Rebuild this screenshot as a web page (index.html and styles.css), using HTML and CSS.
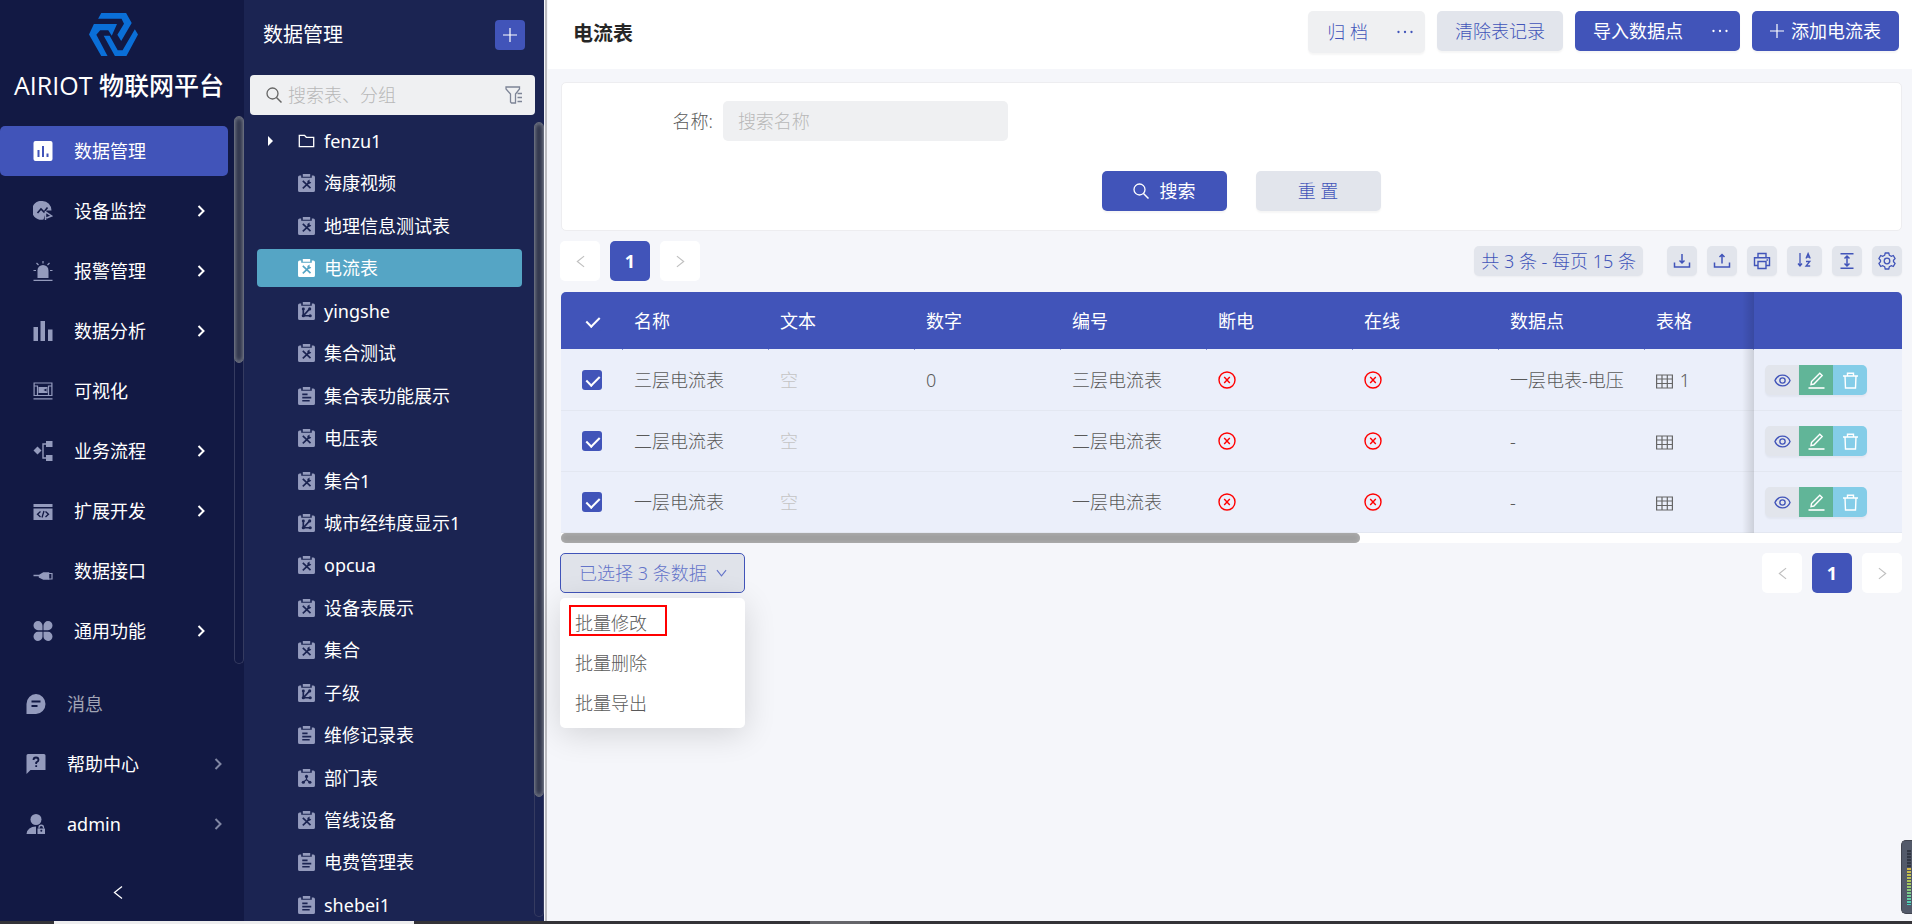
FILE: index.html
```html
<!DOCTYPE html>
<html lang="zh-CN">
<head>
<meta charset="utf-8">
<title>AIRIOT 物联网平台 - 电流表</title>
<link rel="stylesheet" href="styles.css">
</head>
<body>
<svg class="sprite" aria-hidden="true">
  <symbol id="clip" viewBox="0 0 16 17"><path d="M1.500 1.500H3V3.500H13V1.500H14.500A1.500 1.500 0 0 1 16 3V15.500A1.500 1.500 0 0 1 14.500 17H1.500A1.500 1.500 0 0 1 0 15.500V3A1.500 1.500 0 0 1 1.500 1.500ZM4.500 0H11.500V2.500H4.500Z" fill="currentColor"/></symbol>
  <symbol id="t-dev" viewBox="0 0 16 17"><use href="#clip"/><path d="M4.500 6.500L11.800 13.300M10.500 8L4.500 13.500" class="mark"/><path d="M12.500 8A2.200 2.200 0 0 1 9 8.500L8.800 6.500L11 5.200L10.800 7Z" class="markfill"/></symbol>
  <symbol id="t-map" viewBox="0 0 16 17"><use href="#clip"/><path d="M5 6.500V13H11.500M5.500 12.500L10.500 7" class="mark"/><circle cx="5" cy="6.500" r="1.400" class="markfill"/><circle cx="11" cy="6.500" r="1.500" class="markfill"/><circle cx="11.500" cy="13" r="1.500" class="markfill"/><circle cx="5" cy="13" r="1.500" class="markfill"/></symbol>
  <symbol id="t-list" viewBox="0 0 16 17"><use href="#clip"/><path d="M4 7H9M4 10H12.500M4 13H11" class="mark"/></symbol>
  <symbol id="t-org" viewBox="0 0 16 17"><use href="#clip"/><path d="M8 7.500V10M5 12.500L8 10L11 12.500" class="mark thin"/><circle cx="8" cy="7" r="1.500" class="markfill"/><circle cx="5" cy="12.500" r="1.500" class="markfill"/><circle cx="11.200" cy="12.500" r="1.500" class="markfill"/></symbol>
  <symbol id="folder" viewBox="0 0 16 14"><path d="M.8 1.300H6L7.800 3.300H15.200V12.700H.8Z" fill="none" stroke="currentColor" stroke-width="1.300"/></symbol>
  <symbol id="chev" viewBox="0 0 8 12"><path d="M1.500 1L6.500 6L1.500 11" fill="none" stroke="currentColor" stroke-width="2"/></symbol>
  <symbol id="left" viewBox="0 0 10 14"><path d="M9 1L1.500 7L9 13" fill="none" stroke="currentColor" stroke-width="1.300"/></symbol>
  <symbol id="right" viewBox="0 0 10 14"><path d="M1 1L8.500 7L1 13" fill="none" stroke="currentColor" stroke-width="1.300"/></symbol>
  <symbol id="down" viewBox="0 0 12 8"><path d="M1 .8L6 7L11 .8" fill="none" stroke="currentColor" stroke-width="1.200"/></symbol>
  <symbol id="search" viewBox="0 0 16 16"><circle cx="6.500" cy="6.500" r="5.500" fill="none" stroke="currentColor" stroke-width="1.300"/><path d="M10.500 10.500L15.500 15.500" stroke="currentColor" stroke-width="1.500"/></symbol>
  <symbol id="plus" viewBox="0 0 14 14"><path d="M7 0V14M0 7H14" stroke="currentColor" stroke-width="1.200"/></symbol>
  <symbol id="dots" viewBox="0 0 16 4"><circle cx="1.500" cy="2" r="1.150" fill="currentColor"/><circle cx="8" cy="2" r="1.150" fill="currentColor"/><circle cx="14.500" cy="2" r="1.150" fill="currentColor"/></symbol>
  <symbol id="cross" viewBox="0 0 18 18"><circle cx="9" cy="9" r="8" fill="none" stroke="currentColor" stroke-width="1.400"/><path d="M6.200 6L11.800 12M11.800 6L6.200 12" stroke="currentColor" stroke-width="1.400"/></symbol>
  <symbol id="grid" viewBox="0 0 17 15"><path d="M.6 1H16.400V14H.6ZM.6 5H16.400M.6 9.500H16.400M6 1V14M11.300 1V14" fill="none" stroke="currentColor" stroke-width="1.200"/></symbol>
  <symbol id="eye" viewBox="0 0 18 14"><path d="M1 7C4 -.6 14 -.6 17 7C14 14.600 4 14.600 1 7Z" fill="none" stroke="currentColor" stroke-width="1.400"/><circle cx="9" cy="7" r="2.800" fill="none" stroke="currentColor" stroke-width="1.400"/></symbol>
  <symbol id="edit" viewBox="0 0 16 17"><path d="M0 16H16" stroke="currentColor" stroke-width="1.600"/><path d="M3 9.500L11.300 1.200L13.700 3.600L5.400 12L2.500 12.600Z" fill="none" stroke="currentColor" stroke-width="1.400"/></symbol>
  <symbol id="trash" viewBox="0 0 16 17"><path d="M.5 4H15.500M5 4V1.200H11V4M2.500 4L3 16H13L13.500 4" fill="none" stroke="currentColor" stroke-width="1.400"/></symbol>
</svg>

<div class="app">
  <aside class="side">
    <div class="brand">
      <svg class="logo" viewBox="0 0 140 128" preserveAspectRatio="none" aria-hidden="true"><path d="M35 0H106L122 30L92 83L81 65L100 32L93 17H26ZM14 33H80L65 68L55 51H32L21 65L53 128H35L0 64ZM42 68H59L82 111H96L131 48L140 64L107 128H74Z" fill="#0a6fd8"/></svg>
      <div class="brand-name">AIRIOT 物联网平台</div>
    </div>
    <div class="nav-wrap">
      <nav class="nav">
        <a class="nav-item on" href="#"><svg viewBox="0 0 19 20"><rect width="19" height="20" rx="2" fill="currentColor"/><path d="M5 9V16M9.500 5V16M14 12.500V16" stroke="#4154b9" stroke-width="2"/></svg><span>数据管理</span></a>
        <a class="nav-item" href="#"><svg viewBox="0 0 19 20"><path d="M9 0A9 9.500 0 0 1 18 9.500H13L10 18.500A9 9.500 0 1 1 9 0Z" fill="currentColor"/><path d="M4 12L7.500 8L10.500 11L14 6.500" fill="none" stroke="#121944" stroke-width="1.600"/><path d="M12 19V11L18 15L13 17" fill="none" stroke="currentColor" stroke-width="1.500"/></svg><span>设备监控</span><svg class="arr"><use href="#chev"/></svg></a>
        <a class="nav-item" href="#"><svg viewBox="0 0 19 20"><path d="M4 17V9.500A5.500 5.500 0 0 1 15 9.500V17Z" fill="currentColor"/><path d="M0 19.300H19M9.500 0V2.500M3 2L5 4M16 2L14 4M0 9.500H2.500M16.500 9.500H19" stroke="currentColor" stroke-width="1.200"/></svg><span>报警管理</span><svg class="arr"><use href="#chev"/></svg></a>
        <a class="nav-item" href="#"><svg viewBox="0 0 19 20"><path d="M0 6H4.500V20H0ZM7 0H11.500V20H7ZM14.500 8.500H19V20H14.500Z" fill="currentColor"/></svg><span>数据分析</span><svg class="arr"><use href="#chev"/></svg></a>
        <a class="nav-item" href="#"><svg viewBox="0 0 19 20"><path d="M.6 2H18.400V14.500H.6ZM.6 5H4V14M18 5H15V14M0 17.800H19" fill="none" stroke="currentColor" stroke-width="1.200"/><path d="M5 6H14V12H5Z" fill="currentColor"/><path d="M10 9L13 7.500V10.500Z" fill="#121944"/></svg><span>可视化</span></a>
        <a class="nav-item" href="#"><svg viewBox="0 0 19 20"><path d="M4 5.500L8 9.500L4 13.500L0 9.500ZM12.500 0H19V6H12.500ZM12.500 14H19V20H12.500Z" fill="currentColor"/><path d="M13 3H9.500V17H13" fill="none" stroke="currentColor" stroke-width="1.400"/></svg><span>业务流程</span><svg class="arr"><use href="#chev"/></svg></a>
        <a class="nav-item" href="#"><svg viewBox="0 0 19 20"><path d="M0 3H19V6H0ZM0 7.500H19V19H0Z" fill="currentColor"/><path d="M7 10.500L4 13.200L7 16M12 10.500L15 13.200L12 16M10.500 10L8.500 16.500" fill="none" stroke="#121944" stroke-width="1.300"/></svg><span>扩展开发</span><svg class="arr"><use href="#chev"/></svg></a>
        <a class="nav-item" href="#"><svg viewBox="0 0 19 20"><path d="M0 14.500H6M6 14.500L10 12H15V18H10L6 16Z" fill="currentColor" stroke="currentColor" stroke-width="1.500"/><path d="M15 12.500H18.500V18H15" fill="none" stroke="currentColor" stroke-width="1.200"/></svg><span>数据接口</span></a>
        <a class="nav-item" href="#"><svg viewBox="0 0 19 20"><path d="M4.500 0A4.500 4.700 0 0 1 9 4.700V9.200H4.500A4.500 4.600 0 0 1 4.500 0ZM14.500 0A4.500 4.600 0 0 1 14.500 9.200H10V4.700A4.500 4.700 0 0 1 14.500 0ZM4.500 10.800H9V15.300A4.500 4.600 0 1 1 4.500 10.800ZM10 10.800H14.500A4.500 4.600 0 1 1 10 15.300Z" fill="currentColor"/></svg><span>通用功能</span><svg class="arr"><use href="#chev"/></svg></a>
      </nav>
      <div class="bar"><div class="thumb side-thumb"></div></div>
    </div>
    <nav class="foot">
      <a class="foot-item dim" href="#"><svg viewBox="0 0 19 20"><path d="M9.500 0A9.500 10 0 0 1 9.500 20H0V10A9.500 10 0 0 1 9.500 0Z" fill="currentColor"/><path d="M5 7.500H14M5 12H11" stroke="#121944" stroke-width="1.800"/></svg><span>消息</span></a>
      <a class="foot-item" href="#"><svg viewBox="0 0 19 20"><path d="M1.500 0H17.500A1.500 1.500 0 0 1 19 1.500V16H4L0 20V1.500A1.500 1.500 0 0 1 1.500 0Z" fill="currentColor"/><path d="M7 6Q7 3.500 9.500 3.500T12 6Q12 7.200 9.700 8.600V10M9.700 11.300V13" fill="none" stroke="#121944" stroke-width="1.800"/></svg><span>帮助中心</span><svg class="arr"><use href="#chev"/></svg></a>
      <a class="foot-item" href="#"><svg viewBox="0 0 19 20"><ellipse cx="9.500" cy="5.500" rx="5.500" ry="5.500" fill="currentColor"/><path d="M0 20Q1 12.500 9.500 12.500V20ZM11 14.500H18.500V20H11Z" fill="currentColor"/><path d="M12.500 14.500V13.500A2.200 2.200 0 0 1 17 13.500V14.500" fill="none" stroke="currentColor" stroke-width="1.300"/><circle cx="14.800" cy="16.800" r="1" fill="#121944"/></svg><span>admin</span><svg class="arr"><use href="#chev"/></svg></a>
    </nav>
    <button class="collapse" aria-label="收起"><svg><use href="#left"/></svg></button>
  </aside>

  <section class="panel">
    <header class="panel-head"><h2>数据管理</h2><button class="add" aria-label="新增"><svg class="i14"><use href="#plus"/></svg></button></header>
    <div class="find">
      <svg class="i16"><use href="#search"/></svg>
      <input type="text" placeholder="搜索表、分组" aria-label="搜索表、分组">
      <svg class="i17" viewBox="0 0 17 18"><path d="M1 1H14.500V3L10.500 8V17H6.500L5.500 16V8L1 3ZM12.500 7.500H17M12.500 11.500H17M12.500 15.500H17" fill="none" stroke="#7d8496" stroke-width="1.300"/></svg>
    </div>
    <div class="tree-wrap">
      <ul class="tree">
        <li><a href="#"><i class="caret"></i><svg class="fold"><use href="#folder"/></svg>fenzu1</a></li>
        <li><a href="#"><svg><use href="#t-dev"/></svg>海康视频</a></li>
        <li><a href="#"><svg><use href="#t-dev"/></svg>地理信息测试表</a></li>
        <li><a href="#" class="sel"><svg><use href="#t-dev"/></svg>电流表</a></li>
        <li><a href="#"><svg><use href="#t-map"/></svg>yingshe</a></li>
        <li><a href="#"><svg><use href="#t-dev"/></svg>集合测试</a></li>
        <li><a href="#"><svg><use href="#t-list"/></svg>集合表功能展示</a></li>
        <li><a href="#"><svg><use href="#t-dev"/></svg>电压表</a></li>
        <li><a href="#"><svg><use href="#t-dev"/></svg>集合1</a></li>
        <li><a href="#"><svg><use href="#t-map"/></svg>城市经纬度显示1</a></li>
        <li><a href="#"><svg><use href="#t-dev"/></svg>opcua</a></li>
        <li><a href="#"><svg><use href="#t-dev"/></svg>设备表展示</a></li>
        <li><a href="#"><svg><use href="#t-dev"/></svg>集合</a></li>
        <li><a href="#"><svg><use href="#t-map"/></svg>子级</a></li>
        <li><a href="#"><svg><use href="#t-list"/></svg>维修记录表</a></li>
        <li><a href="#"><svg><use href="#t-org"/></svg>部门表</a></li>
        <li><a href="#"><svg><use href="#t-dev"/></svg>管线设备</a></li>
        <li><a href="#"><svg><use href="#t-list"/></svg>电费管理表</a></li>
        <li><a href="#"><svg><use href="#t-list"/></svg>shebei1</a></li>
      </ul>
      <div class="bar"><div class="thumb tree-thumb"></div></div>
    </div>
  </section>
  <div class="split"></div>

  <main class="main">
    <header class="top">
      <h1>电流表</h1>
      <div class="top-actions">
        <div class="group pale"><button class="wide">归 档</button><button class="more" aria-label="更多"><svg><use href="#dots"/></svg></button></div>
        <button class="btn grey">清除表记录</button>
        <div class="group blue"><button>导入数据点</button><button class="more" aria-label="更多"><svg><use href="#dots"/></svg></button></div>
        <button class="btn blue"><svg class="i14"><use href="#plus"/></svg>添加电流表</button>
      </div>
    </header>
    <div class="content">
      <form class="card">
        <div class="field"><label for="name">名称:</label><input id="name" type="text" placeholder="搜索名称"></div>
        <div class="submit"><button type="button" class="btn blue big"><svg class="i16"><use href="#search"/></svg>搜索</button><button type="button" class="btn grey big">重 置</button></div>
      </form>

      <div class="tools">
        <div class="pager"><button disabled aria-label="上一页"><svg><use href="#left"/></svg></button><button class="cur">1</button><button disabled aria-label="下一页"><svg><use href="#right"/></svg></button></div>
        <div class="tool-right">
          <button class="count">共 3 条 - 每页 15 条</button>
          <button class="tool" aria-label="下载"><svg viewBox="0 0 18 18"><path d="M1.500 10.500V15H16.500V10.500M9 2V11M6.500 8.500L9 11L11.500 8.500" fill="none" stroke="currentColor" stroke-width="1.500"/></svg></button>
          <button class="tool" aria-label="上传"><svg viewBox="0 0 18 18"><path d="M1.500 10.500V15H16.500V10.500M9 11.500V2.500M6.500 5L9 2.500L11.500 5" fill="none" stroke="currentColor" stroke-width="1.500"/></svg></button>
          <button class="tool" aria-label="打印"><svg viewBox="0 0 18 18"><path d="M5 5.500V1.500H13V5.500M4.500 13.500H1.500V5.700H16.500V13.500H13.500M5 9.500H13V16.500H5ZM13.500 8H15" fill="none" stroke="currentColor" stroke-width="1.400"/></svg></button>
          <button class="tool sort" aria-label="排序"><svg viewBox="0 0 18 18"><path d="M4 1V14M2 11.500L4 14L6 11.500M10 6.500L12.100 1.500L14.200 6.500M10.800 5H13.400M10 9.500H13.800L10 14H14.200" fill="none" stroke="currentColor" stroke-width="1.300"/></svg></button>
          <button class="tool" aria-label="行高"><svg viewBox="0 0 18 18"><path d="M2.500 1.800H15.500M2.500 16.200H15.500M9 4.500V13.500M6.500 6.500L9 4L11.500 6.500M6.500 11.500L9 14L11.500 11.500" fill="none" stroke="currentColor" stroke-width="1.500"/></svg></button>
          <button class="tool" aria-label="设置"><svg viewBox="0 0 18 18"><path d="M7.200 1H10.800L11.300 3.200L13.200 4.300L15.300 3.500L17.100 6.600L15.500 8.200V9.800L17.100 11.400L15.300 14.500L13.200 13.700L11.300 14.800L10.800 17H7.200L6.700 14.800L4.800 13.700L2.700 14.500L.9 11.400L2.500 9.800V8.200L.9 6.600L2.700 3.500L4.800 4.300L6.700 3.200Z" fill="none" stroke="currentColor" stroke-width="1.300" stroke-linejoin="round"/><circle cx="9" cy="9" r="2.800" fill="none" stroke="currentColor" stroke-width="1.300"/></svg></button>
        </div>
      </div>

      <div class="table-box">
        <table>
          <colgroup><col class="c-check"><col class="c"><col class="c"><col class="c"><col class="c"><col class="c"><col class="c"><col class="c"><col><col class="c-act"></colgroup>
          <thead><tr><th class="ck"><input type="checkbox" checked aria-label="全选"></th><th>名称</th><th>文本</th><th>数字</th><th>编号</th><th>断电</th><th>在线</th><th>数据点</th><th>表格</th><th class="act"></th></tr></thead>
          <tbody>
            <tr><td class="ck"><input type="checkbox" checked aria-label="选择三层电流表"></td><td>三层电流表</td><td class="empty">空</td><td>0</td><td>三层电流表</td><td><svg class="x"><use href="#cross"/></svg></td><td><svg class="x"><use href="#cross"/></svg></td><td>一层电表-电压</td><td><svg class="g"><use href="#grid"/></svg> 1</td><td class="act"><div class="ops"><button class="see" aria-label="查看"><svg><use href="#eye"/></svg></button><button class="ed" aria-label="编辑"><svg><use href="#edit"/></svg></button><button class="del" aria-label="删除"><svg><use href="#trash"/></svg></button></div></td></tr>
            <tr><td class="ck"><input type="checkbox" checked aria-label="选择二层电流表"></td><td>二层电流表</td><td class="empty">空</td><td></td><td>二层电流表</td><td><svg class="x"><use href="#cross"/></svg></td><td><svg class="x"><use href="#cross"/></svg></td><td>-</td><td><svg class="g"><use href="#grid"/></svg></td><td class="act"><div class="ops"><button class="see" aria-label="查看"><svg><use href="#eye"/></svg></button><button class="ed" aria-label="编辑"><svg><use href="#edit"/></svg></button><button class="del" aria-label="删除"><svg><use href="#trash"/></svg></button></div></td></tr>
            <tr><td class="ck"><input type="checkbox" checked aria-label="选择一层电流表"></td><td>一层电流表</td><td class="empty">空</td><td></td><td>一层电流表</td><td><svg class="x"><use href="#cross"/></svg></td><td><svg class="x"><use href="#cross"/></svg></td><td>-</td><td><svg class="g"><use href="#grid"/></svg></td><td class="act"><div class="ops"><button class="see" aria-label="查看"><svg><use href="#eye"/></svg></button><button class="ed" aria-label="编辑"><svg><use href="#edit"/></svg></button><button class="del" aria-label="删除"><svg><use href="#trash"/></svg></button></div></td></tr>
          </tbody>
        </table>
        <div class="hbar"><div class="hthumb"></div></div>
      </div>

      <div class="under">
        <div class="batch">
          <button class="batch-btn">已选择 3 条数据<svg><use href="#down"/></svg></button>
          <div class="menu"><button class="mark-red">批量修改</button><button>批量删除</button><button>批量导出</button></div>
        </div>
        <div class="pager"><button disabled aria-label="上一页"><svg><use href="#left"/></svg></button><button class="cur">1</button><button disabled aria-label="下一页"><svg><use href="#right"/></svg></button></div>
      </div>
    </div>
  </main>
</div>
<div class="taskbar"><div class="task-a"></div><div class="task-b"></div></div>
<div class="meter"><div class="cells"></div></div>
</body>
</html>
```
FILE: styles.css
```css
* { box-sizing: border-box; }
html, body { height: 100%; }
body {
  margin: 0;
  display: flex;
  flex-direction: column;
  overflow: hidden;
  font: 18px/24px "Noto Sans", "Noto Sans CJK SC", sans-serif;
  font-weight: 300;
  color: #595959;
  background: #f5f6fa;
}
button, input { font: inherit; color: inherit; border: 0; padding: 0; margin: 0; }
button { cursor: pointer; display: inline-flex; align-items: center; justify-content: center; }
a { color: inherit; text-decoration: none; }
h1, h2 { margin: 0; }
svg { flex: none; display: block; }
.sprite { position: absolute; width: 0; height: 0; }
.i14 { width: 14px; height: 14px; }
.i16 { width: 16px; height: 16px; }
.i17 { width: 17px; height: 18px; }
.app { flex: 1; min-height: 0; display: flex; }

/* primary navigation */
.side { width: 244px; flex: none; background: #121944; color: #fff; display: flex; flex-direction: column; font-weight: 400; }
.brand { height: 116px; padding: 13px 6px 0 0; display: flex; flex-direction: column; align-items: center; gap: 11px; }
.logo { width: 49px; height: 43px; margin-right: 12px; }
.brand-name { font-size: 25px; line-height: 36px; white-space: nowrap; font-family: "Open Sans", "Noto Sans CJK SC", sans-serif; font-weight: 500; }
.nav-wrap { display: flex; justify-content: space-between; height: 548px; }
.nav { width: 228px; padding-top: 10px; display: flex; flex-direction: column; gap: 10px; overflow: hidden; }
.nav-item { height: 50px; flex: none; display: flex; align-items: center; padding: 0 23px 0 33px; gap: 21px; border-radius: 5px; }
.nav-item svg, .foot-item svg { width: 20px; height: 20px; color: #949bbd; }
.nav-item.on { background: #4154b9; }
.nav-item.on svg { color: #fff; }
.nav-item .arr, .foot-item .arr { width: 8px; height: 12px; margin-left: auto; color: #fff; }
.foot-item .arr { color: #8086a3; }
.bar { width: 10px; flex: none; border: 1px solid #353b60; border-top: 0; border-radius: 5px; }
.thumb { border-radius: 5px; margin: 0 -1px; background: #2a3047; box-shadow: inset 0 0 5px #8c8f9b; border: 1px solid #666b7c; }
.side-thumb { height: 247px; }
.foot { padding-top: 15px; display: flex; flex-direction: column; gap: 10px; }
.foot-item { height: 50px; display: flex; align-items: center; padding: 0 22px 0 26px; gap: 21px; }
.foot-item.dim span { color: #a0a3b4; }
.collapse { margin: 28px 113px auto auto; background: none; color: #fff; padding: 8px; }
.collapse svg { width: 10px; height: 15px; }

/* table list panel */
.panel { width: 300px; flex: none; background: #1b2452; color: #fff; display: flex; flex-direction: column; font-weight: 400; overflow: hidden; }
.panel-head { height: 55px; padding: 15px 19px 0; display: flex; justify-content: space-between; align-items: center; }
.panel-head h2 { font-size: 20px; font-weight: 400; }
.add { width: 30px; height: 30px; border-radius: 4px; background: #4154b9; color: #fff; }
.find { margin: 20px 9px 7px 6px; height: 40px; border-radius: 4px; background: #eff0f2; color: #666; display: flex; align-items: center; gap: 6px; padding: 0 13px 0 16px; }
.find input { flex: 1; min-width: 0; background: none; outline: 0; font-weight: 300; }
input::placeholder { color: #b8b8b8; opacity: 1; }
.tree-wrap { flex: 1; min-height: 0; display: flex; justify-content: space-between; }
.tree { list-style: none; margin: 0 0 -3px 13px; padding: 0; width: 265px; display: flex; flex-direction: column; justify-content: space-between; }
.tree a { position: relative; height: 38px; display: flex; align-items: center; gap: 9px; padding-left: 41px; border-radius: 4px; }
.tree svg { width: 17px; height: 18px; color: #949bbd; }
.tree svg.fold { color: #fff; height: 14px; }
.tree .sel { background: #55a5c5; --mark: #55a5c5; }
.tree .sel svg { color: #fff; }
.caret { position: absolute; left: 11px; border-left: 5px solid #fff; border-top: 5px solid transparent; border-bottom: 5px solid transparent; }
.mark { fill: none; stroke: var(--mark, #1b2452); stroke-width: 1.6; }
.mark.thin { stroke-width: 1.1; }
.markfill { fill: var(--mark, #1b2452); }
.tree-wrap .bar { margin-bottom: 4px; }
.tree-thumb { height: 85%; }
.split { width: 4px; flex: none; background: #bcbcc0; border: solid #f5f6fa; border-width: 0 1px; }

/* main area */
.main { flex: 1; min-width: 0; display: flex; flex-direction: column; }
.top { height: 69px; background: #fff; padding: 11px 13px 0 25px; display: flex; justify-content: space-between; align-items: flex-start; }
.top h1 { font-size: 20px; line-height: 46px; font-weight: 700; color: #262626; }
.top-actions { display: flex; gap: 12px; align-items: flex-start; }
.btn, .group { height: 40px; border-radius: 5px; box-shadow: 0 2px 2px rgba(0, 0, 0, .04); white-space: nowrap; }
.btn { padding: 0 18px; gap: 7px; }
.blue { background: #4154b9; color: #fff; font-weight: 400; }
.grey { background: #e2e5ec; color: #4154b9; }
.group { display: flex; }
.group button { background: none; padding: 0 0 0 18px; }
.group .wide { padding-left: 19px; }
.group .more { padding: 0 12px 0 29px; }
.more svg { width: 16px; height: 4px; }
.pale { height: 42px; background: #eff0f2; color: #4154b9; }
.content { padding: 13px 10px 0 12px; }
.card { margin-left: 1px; height: 149px; padding: 18px 0; background: #fff; border: 1px solid #ededf0; border-radius: 5px; }
.field { width: 33.3%; display: flex; align-items: center; justify-content: flex-end; gap: 10px; }
.field input { width: 285px; height: 40px; padding: 0 15px; border-radius: 5px; background: #eff0f2; }
.submit { margin-top: 30px; padding-left: 19px; display: flex; justify-content: center; gap: 29px; }
.big { width: 125px; gap: 11px; }
.tools { height: 61px; padding-bottom: 1px; display: flex; justify-content: space-between; align-items: center; }
.pager { display: flex; gap: 10px; }
.pager button { width: 40px; height: 40px; border-radius: 5px; background: #fff; color: #bfbfbf; }
.pager .cur { background: #4154b9; color: #fff; font-weight: 700; }
.pager svg { width: 9px; height: 13px; }
.tool-right { display: flex; gap: 10px; align-items: center; color: #4154b9; }
.tool-right button { height: 30px; border-radius: 5px; background: #e2e5ec; box-shadow: 0 1px 2px rgba(0, 0, 0, .04); }
.count { padding: 0 7px; margin-right: 14px; }
.tool { width: 30px; }
.sort { width: 35px; }
.tool svg { width: 18px; height: 18px; }

.table-box { margin-left: 1px; }
table { width: 100%; table-layout: fixed; border-collapse: separate; border-spacing: 0; background: #ebeffa; border-radius: 5px 5px 0 0; }
.c-check { width: 62px; }
.c { width: 146px; }
.c-act { width: 148px; }
th, td { text-align: left; font-weight: inherit; padding: 0 11px; white-space: nowrap; }
th { position: relative; height: 58px; background: #4154b9; background-clip: padding-box; border-bottom: 1px solid #ebeffa; color: #fff; font-weight: 400; }
th:not(.act)::after { content: ""; position: absolute; right: 0; bottom: -1px; width: 1px; height: 1px; background: #8793d6; }
th:first-child { border-radius: 5px 0 0 0; }
th:last-child { border-radius: 0 5px 0 0; }
td { height: 61px; border-bottom: 1px solid #e3e7f1; }
th.ck, td.ck { padding: 0 21px; }
.empty { color: #c4c4c4; }
.ck input { appearance: none; display: block; width: 20px; height: 20px; border-radius: 3px; background: #4154b9; position: relative; }
.ck input::after { content: ""; position: absolute; left: 7px; top: 3px; width: 6px; height: 11px; border: solid #fff; border-width: 0 2px 2px 0; transform: rotate(45deg); }
td .x { width: 18px; height: 18px; color: #f00; }
td .g { width: 17px; height: 15px; color: #666; display: inline-block; vertical-align: -2px; margin-right: 2px; }
.act { position: relative; }
.act::before { content: ""; position: absolute; right: 100%; top: 0; bottom: -1px; width: 12px; background: linear-gradient(to left, rgba(0, 0, 0, .13), transparent); }
.ops { display: flex; }
.ops button { width: 34px; height: 30px; box-shadow: 0 2px 2px rgba(0, 0, 0, .04); }
.ops svg { width: 17px; height: 17px; }
.see { background: #e2e5ec; color: #4154b9; border-radius: 5px 0 0 5px; }
.ed { background: #61b598; color: #fff; }
.del { background: #84cde8; color: #fff; border-radius: 0 5px 5px 0; }
.hbar { height: 10px; background: #fff; border-radius: 0 0 5px 5px; }
.hthumb { width: 59.6%; height: 10px; border-radius: 5px; background: #a0a0a0; box-shadow: inset 0 0 4px #b4b4b4; }

.under { margin-top: 10px; display: flex; justify-content: space-between; align-items: flex-start; }
.batch { position: relative; }
.batch-btn { height: 40px; padding: 0 17px 0 18px; gap: 9px; border: 1px solid #4154b9; border-radius: 5px; background: #e0e3ea; color: #6474c9; white-space: nowrap; }
.batch-btn svg { width: 11px; height: 8px; }
.menu { position: absolute; top: 45px; left: 0; right: 0; padding: 7px 9px 12px; display: flex; flex-direction: column; align-items: flex-start; gap: 9px; background: #fff; border-radius: 5px; box-shadow: 0 6px 32px rgba(0, 0, 0, .14); }
.menu button { height: 31px; padding: 4px 4px 0; border: 2px solid transparent; background: none; }
.menu .mark-red { border-color: #f00; padding-right: 18px; }

/* desktop edge */
.taskbar { height: 3px; flex: none; background: #343338; display: flex; }
.task-a { margin-left: 54px; width: 360px; background: #ededee; }
.task-b { margin-left: 396px; width: 60px; background: #65656a; }
.meter { position: absolute; right: 0; bottom: 10px; width: 11px; height: 74px; padding: 9px 1px 8px 5px; background: #535a6a; border: 1px solid #41444f; border-right: 0; border-radius: 5px 0 0 5px; }
.cells { height: 100%; background: repeating-linear-gradient(transparent 0 2px, #4b5262 2px 3px), linear-gradient(#323744 0 30%, #d9b544 30%, #a9c65a 60%, #48cfc0); }
```
